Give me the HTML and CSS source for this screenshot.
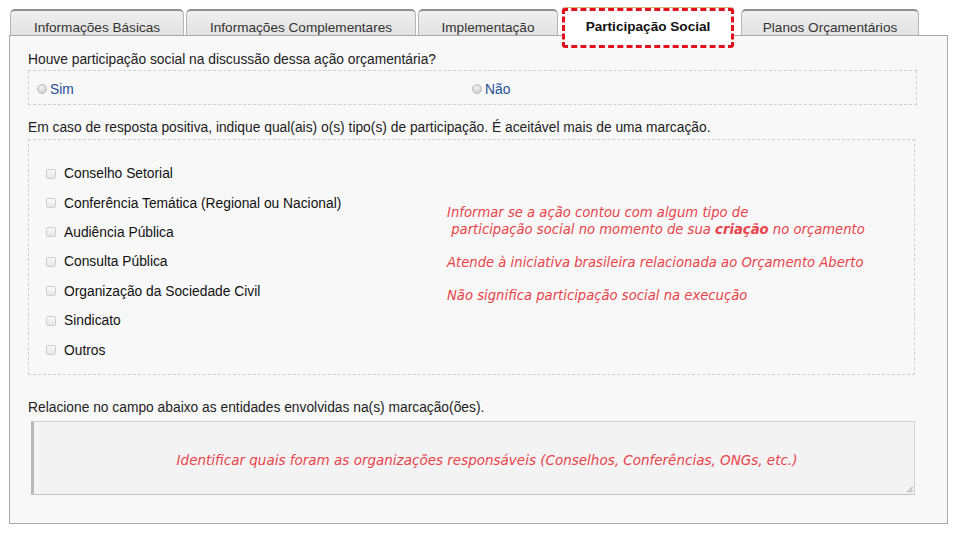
FILE: index.html
```html
<!DOCTYPE html>
<html lang="pt-BR">
<head>
<meta charset="utf-8">
<title>Participação Social</title>
<link rel="stylesheet" href="styles.css">
</head>
<body>
<div class="page">
  <ul class="tabs">
    <li class="tab tab-1">Informações Básicas</li>
    <li class="tab tab-2">Informações Complementares</li>
    <li class="tab tab-3">Implementação</li>
    <li class="tab tab-active">Participação Social</li>
    <li class="tab tab-5">Planos Orçamentários</li>
  </ul>
  <div class="panel">
    <p class="question">Houve participação social na discussão dessa ação orçamentária?</p>
    <div class="radio-box">
      <label class="radio-opt"><span class="radio"></span>Sim</label>
      <label class="radio-opt"><span class="radio"></span>Não</label>
    </div>
    <p class="question q2">Em caso de resposta positiva, indique qual(ais) o(s) tipo(s) de participação. É aceitável mais de uma marcação.</p>
    <div class="check-box">
      <ul class="check-list">
        <li><span class="check"></span>Conselho Setorial</li>
        <li><span class="check"></span>Conferência Temática (Regional ou Nacional)</li>
        <li><span class="check"></span>Audiência Pública</li>
        <li><span class="check"></span>Consulta Pública</li>
        <li><span class="check"></span>Organização da Sociedade Civil</li>
        <li><span class="check"></span>Sindicato</li>
        <li><span class="check"></span>Outros</li>
      </ul>
      <div class="notes">
        <p>Informar se a ação contou com algum tipo de<br>&nbsp;participação social no momento de sua <b>criação</b> no orçamento</p>
        <p>Atende à iniciativa brasileira relacionada ao Orçamento Aberto</p>
        <p>Não significa participação social na execução</p>
      </div>
    </div>
    <p class="question q3">Relacione no campo abaixo as entidades envolvidas na(s) marcação(ões).</p>
    <div class="textarea">
      <span class="ta-text">Identificar quais foram as organizações responsáveis (Conselhos, Conferências, ONGs, etc.)</span>
      <svg class="grip" width="7" height="7" viewBox="0 0 7 7"><path d="M6.5 1 L1 6.5 M6.5 4 L4 6.5" stroke="#888" stroke-width="1" fill="none"/></svg>
    </div>
  </div>
</div>
</body>
</html>
```
FILE: styles.css
```css
* { box-sizing: border-box; }
html, body { margin: 0; padding: 0; background: #fff; }
body {
  font-family: "Liberation Sans", Arial, sans-serif;
  font-size: 13.8px;
  color: #222;
}
.page {
  width: 939px;
  margin-left: 9px;
  padding-top: 8px;
}
.tabs {
  list-style: none;
  margin: 0;
  padding: 0 0 0 1px;
  display: flex;
  align-items: flex-end;
  height: 27px;
  position: relative;
  z-index: 2;
}
.tab {
  height: 26px;
  margin-right: 2px;
  border: 1px solid #b5b5b5;
  border-bottom: none;
  border-top: 2px solid #8f8f8f;
  border-radius: 5px 5px 0 0;
  background: linear-gradient(#efefef, #e2e2e2);
  color: #333;
  font-size: 13.6px;
  display: flex;
  align-items: center;
  justify-content: center;
  padding-top: 8px;
}
.tab-1 { width: 174px; }
.tab-2 { width: 230px; }
.tab-3 { width: 140px; }
.tab-5 { width: 178px; margin-left: 5px; }
.tab-active {
  width: 172px;
  height: 40px;
  align-self: flex-start;
  margin-top: 0;
  margin-left: 2px;
  margin-bottom: -13px;
  border: 3px dashed #e3101b;
  border-radius: 3px;
  background: #fff;
  color: #111;
  font-weight: bold;
  padding-top: 0;
  padding-bottom: 4px;
  box-shadow: 0 -1px 0 #d8b07a;
}
.panel {
  border: 1px solid #a9a9a9;
  background: #f8f8f8;
  padding: 15px 30px 28px 18px;
}
.question {
  margin: 0;
  line-height: 18px;
  color: #222;
}
.radio-box {
  margin-top: 1px;
  border: 1px dashed #cfcfcf;
  height: 35px;
  display: flex;
  align-items: center;
  padding: 3px 0 0 8px;
}
.radio-opt {
  display: flex;
  align-items: center;
  color: #1d4f93;
  width: 435px;
}
.radio {
  width: 10px;
  height: 10px;
  border-radius: 50%;
  background: radial-gradient(circle at 40% 35%, #f2f2f2, #c4c4c4);
  border: 1px solid #bdbdbd;
  margin-right: 3px;
}
.q2 { margin-top: 14px; }
.check-box {
  margin-top: 2px;
  border: 1px dashed #cfcfcf;
  height: 236px;
  display: flex;
  padding: 19px 0 0 17px;
  margin-right: 2px;
}
.check-list {
  list-style: none;
  margin: 0;
  padding: 0;
  width: 401px;
}
.check-list li {
  height: 29.4px;
  display: flex;
  align-items: center;
  color: #111;
}
.check {
  width: 10px;
  height: 10px;
  border: 1px solid #cfcfcf;
  border-radius: 2px;
  background: linear-gradient(#fafafa, #e6e6e6);
  margin-right: 8px;
}
.notes {
  margin-top: 45px;
  font-family: "DejaVu Sans", Verdana, sans-serif;
  font-style: italic;
  font-size: 13.2px;
  color: #e9434a;
  line-height: 17px;
  white-space: nowrap;
}
.notes p { margin: 0 0 16px 0; }
.notes b { font-weight: bold; }
.q3 { margin-top: 24px; }
.textarea {
  position: relative;
  margin: 4px 2px 0 3px;
  height: 74px;
  background: #f3f3f3;
  border: 1px solid #d2d2d2;
  border-left: 3px solid #b9b9b9;
  border-bottom-color: #c4c4c4;
  display: flex;
  align-items: center;
  justify-content: center;
  font-family: "DejaVu Sans", Verdana, sans-serif;
  font-style: italic;
  font-size: 13.5px;
  color: #e9434a;
  padding: 3px 0 0 26px;
}
.grip {
  position: absolute;
  right: 1px;
  bottom: 1px;
}
```
